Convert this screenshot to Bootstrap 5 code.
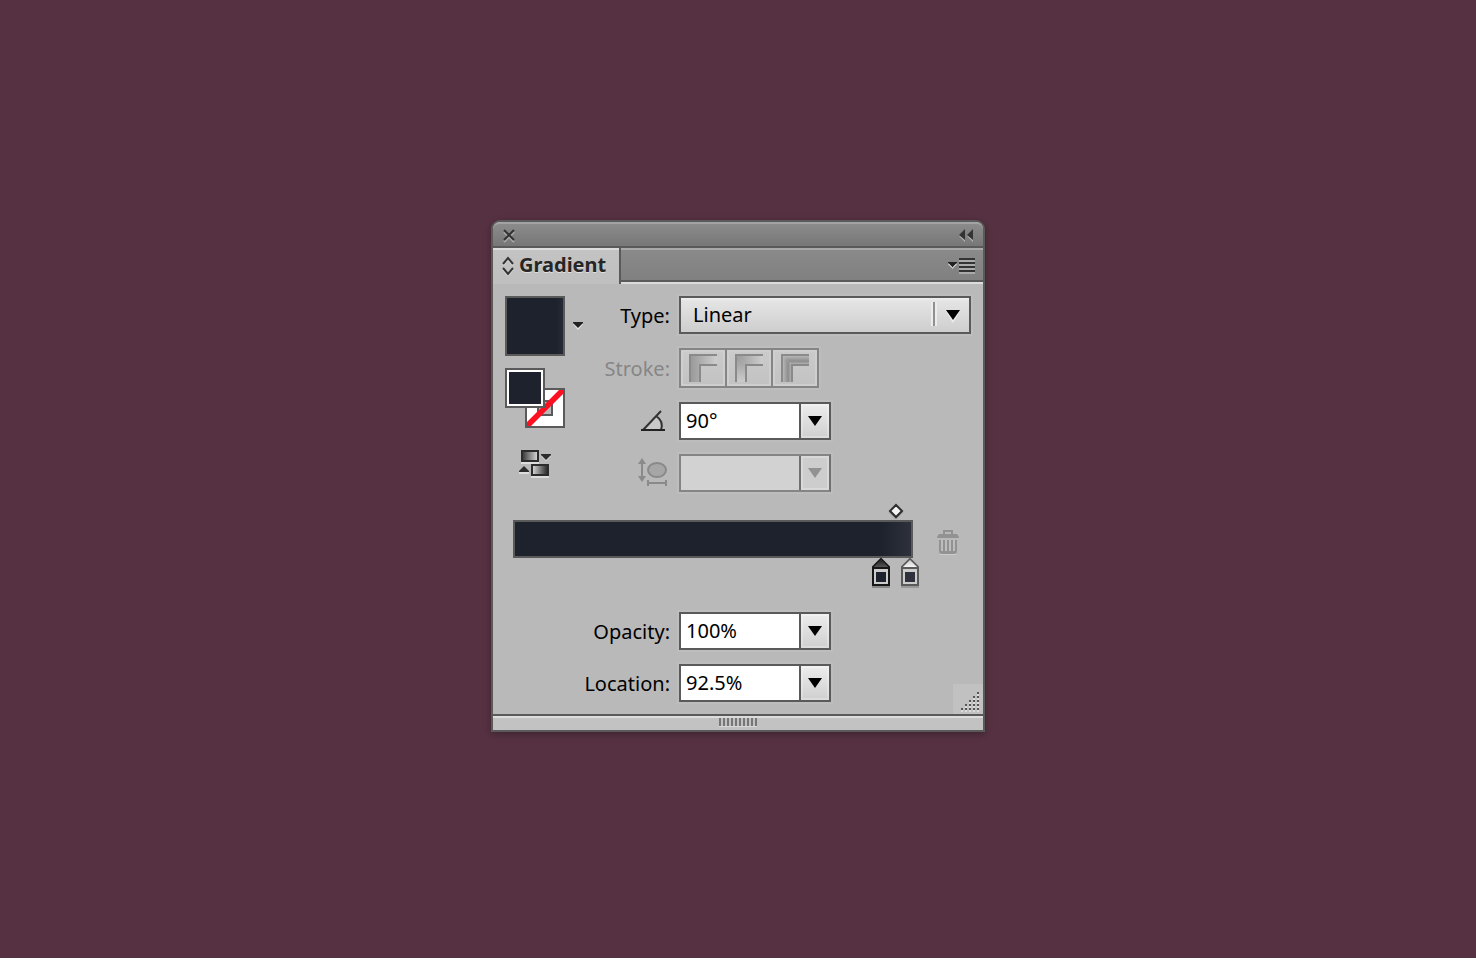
<!DOCTYPE html>
<html lang="en">
<head>
<meta charset="utf-8">
<meta name="viewport" content="width=device-width, initial-scale=1">
<title>Gradient panel</title>
<link href="https://cdn.jsdelivr.net/npm/bootstrap@5.3.0/dist/css/bootstrap.min.css" rel="stylesheet">
<style>
  :root { --edge: #5a5a5a; --panel: #b9b9b9; --ink: #1d222d; }
  body { background: #fff; color: #000; font: 20px/28px "Noto Sans", "Open Sans", sans-serif; }
  .desk { min-height: calc(100vh - 4px); background: #563142; padding-bottom: 6px; }
  .palette { max-width: 494px; background: var(--panel); border: 2px solid var(--edge); border-radius: 9px 9px 0 0; box-shadow: 0 2px 7px rgba(0,0,0,.3); }
  .plain { border: 0; padding: 0; background: none; line-height: 0; color: #333; }
  svg { display: block; overflow: visible; }
  .titlebar { height: 26px; background: linear-gradient(#8b8b8b, #777); border-top: 2px solid #a3a3a3; border-bottom: 2px solid var(--edge); border-radius: 7px 7px 0 0; padding: 0 9px; }
  .tabbar { height: 36px; background: linear-gradient(#a9a9a9 2px, #8a8a8a 2px, #808080 32px, var(--edge) 32px, var(--edge) 34px, #dcdcdc 34px); }
  .tab-item { background: linear-gradient(#dcdcdc 2px, #c3c3c3 2px, #bfbfbf); border-right: 2px solid var(--edge); padding: 0 12px 2px 9px; width: 128px; font-weight: 700; color: #262626; text-shadow: 0 1px 0 #e0e0e0; gap: 5px; }
  .content { padding: 12px; }
  .fields { display: grid; grid-template-columns: 1fr 292px; gap: 14px 8px; align-items: center; }
  .fields label, .fields .name { text-align: right; justify-self: end; }
  .fields .name, .fields .text-name { padding: 2px 1px 0 0; }
  .muted { color: #868686; }
  .left-col { width: 84px; }
  .swatch { width: 60px; height: 60px; border: 2px solid var(--edge); background: linear-gradient(90deg, var(--ink) 88%, #272a35); }
  .pair { width: 60px; height: 60px; margin: 12px 0 22px; }
  .type-box { position: relative; }
  .type-box select { width: 100%; height: 38px; appearance: none; border: 2px solid var(--edge); border-radius: 0; padding: 0 12px; background: linear-gradient(#f0f0f0, #e4e4e4 3px, #cecece); color: #000; line-height: 28px; box-shadow: 0 0 0 2px rgba(255,255,255,.07); }
  .type-box svg { position: absolute; right: 0; top: 0; pointer-events: none; }
  .combo { width: 152px; height: 38px; border: 2px solid var(--edge); box-shadow: 0 0 0 2px rgba(255,255,255,.07); }
  .combo input { flex: 1; min-width: 0; border: 0; padding: 0 5px; background: #fff; color: #000; line-height: 28px; border-radius: 0; }
  .combo button { width: 30px; border: 0; border-left: 2px solid var(--edge); padding: 0; background: linear-gradient(#ededed, #cfcfcf); color: #000; box-shadow: inset 0 0 0 2px rgba(255,255,255,.25); }
  .combo button svg { margin: 0 auto; }
  .combo.off { border-color: #858585; border-right-color: #707070; }
  .combo.off input { background: #d2d2d2; }
  .combo.off button { background: #cdcdcd; border-color: #707070; color: #929292; }
  .strokes { width: 140px; height: 40px; border: 2px solid #858585; box-shadow: 0 0 0 2px rgba(255,255,255,.07); }
  .strokes button { flex: 1; padding: 0; border: 0; background: linear-gradient(#cbcbcb, #c2c2c2); box-shadow: inset 0 0 0 2px #cfcfcf; }
  .strokes button + button { border-left: 2px solid #858585; }
  .ramp-row { padding: 12px 12px 0 8px; height: 120px; }
  .track { width: 400px; }
  .ramp { margin-top: 16px; height: 38px; border: 2px solid var(--edge); background: linear-gradient(90deg, var(--ink) 92.5%, #2e313b); }
  .handle { position: absolute; transform: translateX(-50%); }
  .on-top { top: 0; }
  .below { top: 53px; }
  .bin { margin-top: 26px; }
  .footbar { height: 16px; border-top: 2px solid var(--edge); background: linear-gradient(#dcdcdc 2px, #c2c2c2 2px); }
  .grip { width: 38px; height: 8px; margin-top: 2px; background: repeating-linear-gradient(90deg, #767676 0 2px, transparent 2px 4px); box-shadow: 0 1px 0 #d8d8d8; }
  .resizer { position: absolute; right: 0; bottom: 0; background: #c1c1c1; }
</style>
</head>
<body>
<svg width="0" height="0" class="position-absolute" aria-hidden="true">
  <defs>
    <symbol id="down" viewBox="0 0 14 12"><path d="M0 1h14L7 11z" fill="currentColor"/></symbol>
    <linearGradient id="fadeA"><stop stop-color="#969696"/><stop offset="1" stop-color="#cecece"/></linearGradient>
    <linearGradient id="fadeB" x2="0" y2="1"><stop stop-color="#949494"/><stop offset="1" stop-color="#ccc"/></linearGradient>
    <linearGradient id="fadeC" x2="0" y2="1"><stop stop-color="#c6c6c6"/><stop offset=".65" stop-color="#8d8d8d"/><stop offset="1" stop-color="#bbb"/></linearGradient>
    <linearGradient id="fadeD"><stop stop-color="#c6c6c6"/><stop offset=".65" stop-color="#8d8d8d"/><stop offset="1" stop-color="#bbb"/></linearGradient>
    <linearGradient id="greyLR"><stop stop-color="#333"/><stop offset="1" stop-color="#ddd"/></linearGradient>
    <linearGradient id="greyRL"><stop stop-color="#ddd"/><stop offset="1" stop-color="#222"/></linearGradient>
    <linearGradient id="roofDark" x2="0" y2="1"><stop stop-color="#222"/><stop offset="1" stop-color="#555"/></linearGradient>
    <linearGradient id="roofLight" x2="0" y2="1"><stop stop-color="#ccc"/><stop offset="1" stop-color="#f4f4f4"/></linearGradient>
  </defs>
</svg>
<main class="desk d-flex align-items-center justify-content-center">
  <section class="palette w-100" aria-label="Gradient">
    <header class="titlebar d-flex align-items-center justify-content-between">
      <button class="plain" aria-label="Close"><svg width="14" height="12"><path d="M2 3l10 10M12 3L2 13" stroke="#aaa" stroke-width="2"/><path d="M2 1l10 10M12 1L2 11" stroke="#333" stroke-width="2"/></svg></button>
      <button class="plain" aria-label="Collapse"><svg width="15" height="12"><path d="M6 2v11L0 7zM14 2v11L8 7z" fill="#b0b0b0"/><path d="M6 0v11L0 6zM14 0v11L8 6z" fill="#333"/></svg></button>
    </header>
    <div class="tabbar d-flex justify-content-between">
      <div class="tab-item d-flex align-items-center"><svg width="12" height="18" fill="none"><path d="M1 9l5-6 5 6M1 13l5 6 5-6" stroke="#e2e2e2" stroke-width="2"/><path d="M1 8l5-6 5 6M1 12l5 6 5-6" stroke="#333" stroke-width="2"/></svg><span>Gradient</span></div>
      <button class="plain pe-2" aria-label="Panel menu"><svg width="28" height="18" shape-rendering="crispEdges"><path d="M0 7h10l-5 5z" fill="#bbb"/><path d="M0 5h10l-5 5z" fill="#222"/><path d="M12 4h16M12 8h16M12 12h16M12 16h16" stroke="#aaa" stroke-width="2"/><path d="M12 2h16M12 6h16M12 10h16M12 14h16" stroke="#333" stroke-width="2"/></svg></button>
    </div>
    <div class="content position-relative">
      <div class="d-flex">
        <div class="left-col flex-shrink-0">
          <div class="d-flex align-items-center">
            <div class="swatch"></div>
            <button class="plain ms-2" aria-label="Gradient presets"><svg width="10" height="9"><path d="M0 2h10l-5 6z" fill="#e6e6e6"/><path d="M0 0h10v1L5 6 0 1z" fill="#222"/></svg></button>
          </div>
          <div class="pair">
            <svg width="60" height="60" role="img" aria-label="Fill and stroke">
              <path d="M21 21h38v38H21z" fill="#fff" stroke="#5a5a5a" stroke-width="2"/>
              <path d="M33 33h14v14H33z" fill="#b9b9b9" stroke="#5a5a5a" stroke-width="2"/>
              <path d="M22 58v-4L54 22h4v4L26 58z" fill="#fc1022"/>
              <path d="M1 1h38v38H1z" fill="#fff" stroke="#5a5a5a" stroke-width="2"/>
              <path d="M4 4h32v32H4z" fill="#1d222d"/>
            </svg>
          </div>
          <button class="plain ms-3 d-block" aria-label="Reverse gradient"><svg width="32" height="28">
            <path d="M0 12h18v2H0zM10 26h18v2H10z" fill="#ddd"/>
            <path d="M1 1h16v10H1z" fill="url(#greyLR)" stroke="#2c2c2c" stroke-width="2"/>
            <path d="M11 15h16v10H11z" fill="url(#greyRL)" stroke="#2c2c2c" stroke-width="2"/>
            <path d="M20 6h10l-5 5z" fill="#ddd"/><path d="M20 4h10v1l-5 5-5-5z" fill="#2c2c2c"/>
            <path d="M-2 22h10v2H-2z" fill="#ddd"/><path d="M-2 22v-1l5-5 5 5v1z" fill="#2c2c2c"/>
          </svg></button>
        </div>
        <div class="fields flex-grow-1">
          <label class="text-name" for="type">Type:</label>
          <div class="type-box">
            <select id="type"><option>Linear</option><option>Radial</option></select>
            <svg width="38" height="38"><path d="M-2 6h6v24h-6z" fill="#ececec"/><path d="M0 6h2v24H0z" fill="#909090"/><path d="M13 15h14l-7 12z" fill="#eee"/><path d="M13 14h14l-7 10z"/></svg>
          </div>
          <span class="name muted" id="strokeName">Stroke:</span>
          <div class="strokes d-flex" role="group" aria-labelledby="strokeName">
            <button disabled aria-label="Apply gradient within stroke"><svg width="44" height="36"><path d="M8 32V4h28v11H19v17z" fill="url(#fadeA)"/><path d="M9 32V5h27M19 32V15h17" fill="none" stroke="#8a8a8a" stroke-width="2"/></svg></button>
            <button disabled aria-label="Apply gradient along stroke"><svg width="42" height="36"><path d="M8 4h28v11H19z" fill="url(#fadeA)"/><path d="M8 4l11 11v17H8z" fill="url(#fadeB)"/><path d="M9 32V5h27M19 32V15h17" fill="none" stroke="#8a8a8a" stroke-width="2"/></svg></button>
            <button disabled aria-label="Apply gradient across stroke"><svg width="42" height="36"><path d="M8 4h28v11H19z" fill="url(#fadeC)"/><path d="M8 4l11 11v17H8z" fill="url(#fadeD)"/><path d="M9 32V5h27M19 32V15h17" fill="none" stroke="#8a8a8a" stroke-width="2"/></svg></button>
          </div>
          <label for="angle" aria-label="Angle"><svg width="30" height="24"><path d="M3 22L15 8q8 5 5 14z" fill="#c9c9c9"/><path d="M2 21L20 2M15 7q8 5 5 14" fill="none" stroke="#333" stroke-width="2"/><path d="M0 20h24v2H0z" fill="#222"/></svg></label>
          <div class="combo d-flex"><input id="angle" value="90°"><button aria-label="Angle presets"><svg width="14" height="12"><use href="#down"/></svg></button></div>
          <label for="ratio" aria-label="Aspect ratio"><svg width="33" height="30" fill="none" stroke="#8a8a8a" stroke-width="2"><path d="M4 5v16"/><path d="M0 6l4-6 4 6zM0 18l4 6 4-6z" fill="#8a8a8a" stroke="none"/><ellipse cx="19" cy="12" rx="9" ry="7" fill="#a6a6a6"/><path d="M10 25h18M10 22v6M28 22v6"/></svg></label>
          <div class="combo off d-flex"><input id="ratio" disabled><button disabled aria-label="Aspect ratio presets"><svg width="14" height="12"><use href="#down"/></svg></button></div>
        </div>
      </div>
      <div class="ramp-row d-flex align-items-start justify-content-between">
        <div class="track position-relative">
          <div class="ramp"></div>
          <button class="plain handle on-top" style="left:95.75%" aria-label="Midpoint"><svg width="14" height="15"><path d="M7 2l6 6-6 6-6-6z" fill="none" stroke="#999" stroke-width="2"/><path d="M7 1l6 6-6 6-6-6z" fill="#f4f4f4" stroke="#2e2e2e" stroke-width="2"/></svg></button>
          <button class="plain handle below" style="left:92%" aria-label="Stop at 92.5%"><svg width="20" height="31"><path d="M1 30h18" stroke="#888" stroke-width="2"/><path d="M2 10l8-8 8 8v18H2z" fill="#ccc" stroke="#171717" stroke-width="2"/><path d="M3 10l7-7 7 7z" fill="url(#roofDark)"/><path d="M2 11h16" stroke="#171717" stroke-width="2"/><path d="M5 15h10v10H5z" fill="#1d222d"/></svg></button>
          <button class="plain handle below" style="left:99.25%" aria-label="Stop at 100%"><svg width="20" height="31"><path d="M1 30h18" stroke="#999" stroke-width="2"/><path d="M2 10l8-8 8 8v18H2z" fill="#ccc" stroke="#5a5a5a" stroke-width="2"/><path d="M3 10l7-7 7 7z" fill="url(#roofLight)"/><path d="M2 11h16" stroke="#5a5a5a" stroke-width="2"/><path d="M5 15h10v10H5z" fill="#2e313b"/></svg></button>
        </div>
        <button class="plain bin" disabled aria-label="Delete stop"><svg width="22" height="25"><path d="M3 24h16" stroke="#ccc" stroke-width="2"/><path d="M7 4V1h8v3" fill="none" stroke="#929292" stroke-width="2"/><path d="M0 7l2-3h18l2 3v1H0zM2 10h18v11q0 3-3 3H5q-3 0-3-3z" fill="#929292"/><path d="M5 10v11M9 10v11M13 10v11M17 10v11" stroke="#bdbdbd" stroke-width="2"/></svg></button>
      </div>
      <div class="fields">
        <label class="text-name" for="opacity">Opacity:</label>
        <div class="combo d-flex"><input id="opacity" value="100%"><button aria-label="Opacity presets"><svg width="14" height="12"><use href="#down"/></svg></button></div>
        <label class="text-name" for="location">Location:</label>
        <div class="combo d-flex"><input id="location" value="92.5%"><button aria-label="Location presets"><svg width="14" height="12"><use href="#down"/></svg></button></div>
      </div>
      <svg class="resizer" width="30" height="30" shape-rendering="crispEdges" fill="none" stroke="#555" stroke-width="2" stroke-dasharray="2 2"><path stroke="#ddd" d="M26 11h-2M26 15h-6M26 19h-10M26 23h-14M26 27h-18"/><path d="M26 9h-2M26 13h-6M26 17h-10M26 21h-14M26 25h-18"/></svg>
    </div>
    <footer class="footbar d-flex justify-content-center"><div class="grip"></div></footer>
  </section>
</main>
<script src="https://cdn.jsdelivr.net/npm/bootstrap@5.3.0/dist/js/bootstrap.bundle.min.js"></script>
</body>
</html>
